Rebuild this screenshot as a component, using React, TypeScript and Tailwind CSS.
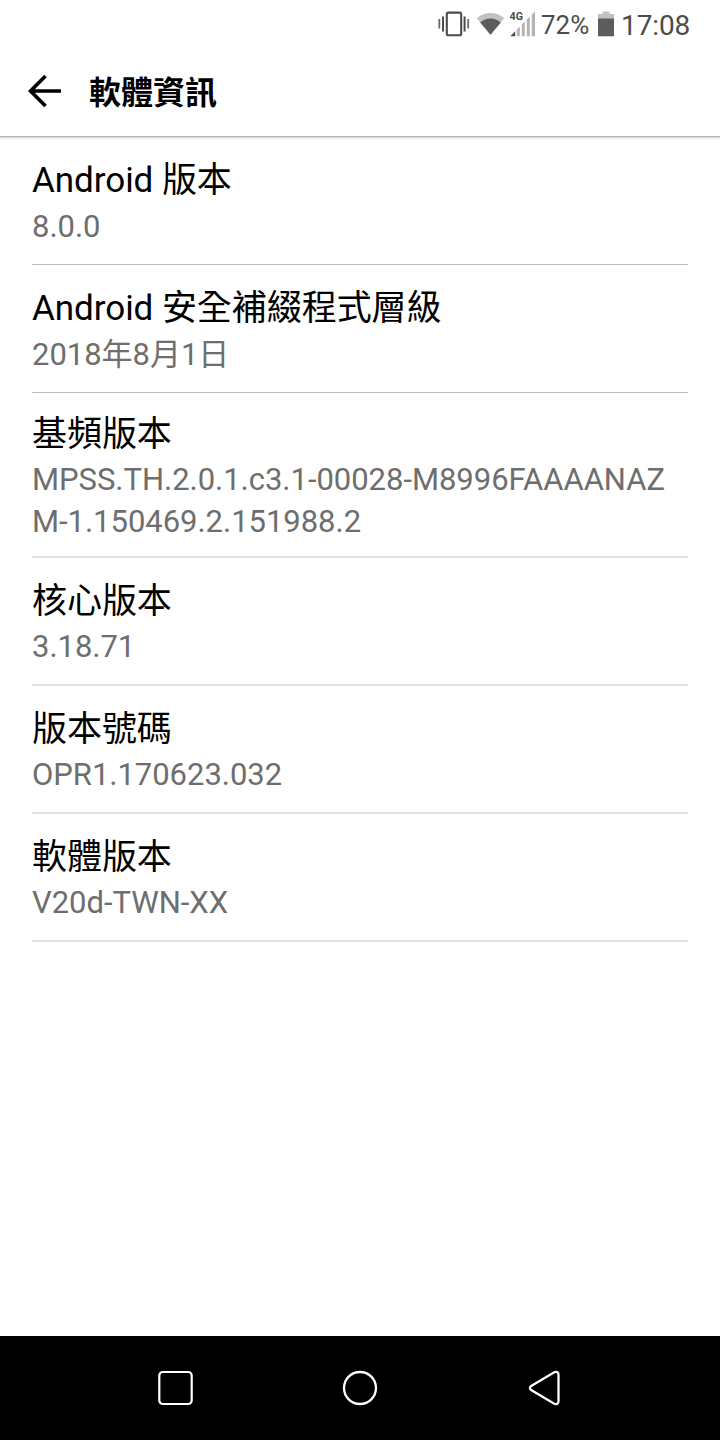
import clsx from 'clsx';

const rows = [
  { title: 'Android 版本', lines: ['8.0.0'], className: 'h-32 pt-5 border-b border-[#bdbdbd]', gap: 'mb-px' },
  {
    title: 'Android 安全補綴程式層級',
    lines: ['2018年8月1日'],
    className: 'h-32 pt-5 border-b border-[#bdbdbd]',
    gap: 'mb-px',
  },
  {
    title: '基頻版本',
    lines: ['MPSS.TH.2.0.1.c3.1-00028-M8996FAAAANAZ', 'M-1.150469.2.151988.2'],
    className: 'h-[165px] pt-[18px] border-b-2 border-[#e4e4e4]',
  },
  { title: '核心版本', lines: ['3.18.71'], className: 'h-32 pt-5 border-b-2 border-[#e4e4e4]' },
  { title: '版本號碼', lines: ['OPR1.170623.032'], className: 'h-32 pt-5 border-b-2 border-[#e4e4e4]' },
  { title: '軟體版本', lines: ['V20d-TWN-XX'], className: 'h-32 pt-5 border-b-2 border-[#e4e4e4]' },
];

function StatusBar() {
  return (
    <div className="flex h-[50px] items-center text-[#4c4c4c]">
      {/* Vibrate, wifi and signal */}
      <svg className="ml-[436px] h-[50px] w-[104px] shrink-0" viewBox="436 0 104 50">
        <rect x="446.8" y="12.6" width="14.4" height="22.6" rx="1.5" fill="none" stroke="#4c4c4c" strokeWidth="2.1" />
        <path d="M443 16.5v15M464.6 16.5v15" stroke="#4c4c4c" strokeWidth="2" />
        <path d="M439.3 19v9.5M468.2 19v9.5" stroke="#6a6a6a" strokeWidth="1.8" />
        <path d="M476.8 18.2C484.5 11.2 496.5 11.2 504.2 18.2L490.5 34.8Z" fill="#c2c2c2" />
        <path d="M480.2 22.6C486.5 17.2 494.5 17.2 500.8 22.6L490.5 34.8Z" fill="#5c5c5c" />
        <path d="M510.3 36.2L515.2 31.3V36.2Z" fill="#4c4c4c" />
        <path d="M516.8 29.6L519.8 26.6V36.2H516.8Z" fill="#b4b4b4" />
        <path d="M521.8 24.6L524.8 21.6V36.2H521.8Z" fill="#b4b4b4" />
        <path d="M526.8 19.6L529.8 16.6V36.2H526.8Z" fill="#b4b4b4" />
        <path d="M531.8 14.6L535 11.4V36.2H531.8Z" fill="#b4b4b4" />
        <text
          x="509.6"
          y="19.8"
          fontSize="11.5"
          fontWeight="700"
          fill="#4c4c4c"
          fontFamily="Roboto, sans-serif"
          textLength="13.4"
          lengthAdjust="spacingAndGlyphs"
        >
          4G
        </text>
      </svg>
      <span className="ml-px w-[57px] pt-px text-[26px]">72%</span>
      <svg className="h-[50px] w-4 shrink-0" viewBox="598 0 16 50">
        <path d="M602.5 11.5H609.5V14H614V19H598V14H602.5Z" fill="#c2c2c2" />
        <path d="M598 18.5H614V36.3H598Z" fill="#5c5c5c" />
      </svg>
      <span className="ml-[7px] pt-px text-[28px] tracking-[-0.1px]">17:08</span>
    </div>
  );
}

function NavBar() {
  return (
    <nav className="flex h-[104px] items-center bg-black pl-[157px]">
      <svg width="36" height="36" viewBox="0 0 36 36" fill="none" stroke="white" strokeWidth="2.2">
        <rect x="2.3" y="2" width="32.4" height="32" rx="3.5" />
      </svg>
      <svg className="ml-[149px]" width="36" height="36" viewBox="0 0 36 36" fill="none" stroke="white" strokeWidth="2.3">
        <circle cx="18" cy="18" r="16" />
      </svg>
      <svg className="ml-[150px]" width="34" height="36" viewBox="0 0 34 36" fill="none" stroke="white" strokeWidth="2.3">
        <path d="M3.2 15.9L25.8 2.5Q30.5 0.5 30.5 5V31Q30.5 35.5 25.8 33.5L3.2 20.1Q0.6 18 3.2 15.9Z" />
      </svg>
    </nav>
  );
}

export default function App() {
  return (
    <div className="flex h-[1440px] w-[720px] flex-col overflow-hidden bg-white font-[Roboto,'Noto_Sans_CJK_TC',sans-serif]">
      <StatusBar />

      <header className="flex h-[87px] shrink-0 items-center border-b border-[#b4b4b4] pb-1 pl-7 shadow-[0_1px_2px_rgba(0,0,0,0.2)]">
        <svg width="34" height="34" viewBox="0 0 34 34" fill="none" stroke="black" strokeWidth="3.6">
          <path d="M33 17H3M17.5 2L2.5 17L17.5 32" />
        </svg>
        <h1 className="ml-[27px] pt-1 text-[32px] leading-[42px] font-bold">軟體資訊</h1>
      </header>

      <main className="flex-1 px-8">
        {rows.map((row) => (
          <section key={row.title} className={clsx('whitespace-nowrap', row.className)}>
            <h2 className={clsx('text-[35px] leading-[48px] tracking-[-0.05px] text-black', row.gap)}>{row.title}</h2>
            {row.lines.map((line) => (
              <p key={line} className="text-[31px] leading-[42px] tracking-[-0.03px] text-[#6e6e6e]">
                {line}
              </p>
            ))}
          </section>
        ))}
      </main>

      <NavBar />
    </div>
  );
}
